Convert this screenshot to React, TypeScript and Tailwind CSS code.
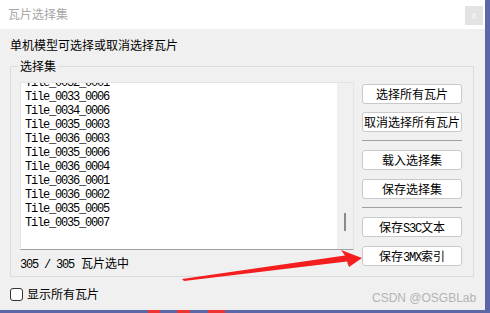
// 瓦片选择集 dialog

const tiles = [
  "Tile_0032_0001",
  "Tile_0033_0006",
  "Tile_0034_0006",
  "Tile_0035_0003",
  "Tile_0036_0003",
  "Tile_0035_0006",
  "Tile_0036_0004",
  "Tile_0036_0001",
  "Tile_0036_0002",
  "Tile_0035_0005",
  "Tile_0035_0007",
];

const cjk = "font-['Noto_Sans_CJK_SC',sans-serif]";
const mono = "font-['Liberation_Mono','Noto_Sans_CJK_SC',monospace] tracking-[-1.2px]";

function Btn({ children, first }: { children: React.ReactNode; first?: boolean }) {
  return (
    <button
      className={`${first ? "" : "mt-[9px]"} h-[20px] w-full rounded-[3px] border border-[#c9c9c9] bg-white text-[12px] leading-[18px] text-black ${cjk}`}
    >
      {children}
    </button>
  );
}

export default function App() {
  return (
    <div className="relative flex h-[313px] w-[490px] flex-col overflow-hidden bg-[#5b67a6]">
      <div className="flex h-[310px] w-[485px] flex-col">
        {/* Title bar */}
        <div className="flex h-[29px] items-start justify-between bg-white pl-[8px] pr-[2px]">
          <span className={`mt-[6px] text-[12px] leading-[16px] text-[#a6a6a6] ${cjk}`}>瓦片选择集</span>
          <div className="mt-[6px] flex h-[19px] w-[18px] items-center justify-center bg-[#e3e3e3] text-[10px] leading-none text-[#f7f7f7] font-['Liberation_Sans',sans-serif]">
            x
          </div>
        </div>

        {/* Body */}
        <div className={`flex-1 bg-[#f0f0f0] pl-[10px] pr-[11px] text-[12px] text-black ${cjk}`}>
          <div className="pt-[8px] leading-[16px]">单机模型可选择或取消选择瓦片</div>

          {/* Group box */}
          <div className="relative mt-[13px] h-[211px] border border-[#dcdcdc]">
            <span className="absolute left-[7px] top-[-9px] bg-[#f0f0f0] px-[2px] leading-[16px]">选择集</span>

            <div className="flex pl-[9px] pt-[15px]">
              <div className="flex w-[334px] flex-col">
                {/* List box */}
                <div className="flex h-[168px] border border-[#e4e4e4] border-b-[#a0a0a0]">
                  <div className="flex-1 overflow-hidden bg-white">
                    <div className={`-mt-[7px] pl-[4px] text-[12px] leading-[14px] ${mono}`}>
                      {tiles.map((t) => (
                        <div key={t}>{t}</div>
                      ))}
                    </div>
                  </div>
                  <div className="w-[16px] bg-[#f0f0f0] pl-[7px] pt-[130px]">
                    <div className="h-[18px] w-[2px] bg-[#8a8a8a]" />
                  </div>
                </div>
                <div className="mt-[5px] pl-[0px] leading-[16px]">
                  <span className={mono}>305 / 305 </span>
                  <span className="ml-[1px]">瓦片选中</span>
                </div>
              </div>

              {/* Buttons */}
              <div className="ml-[8px] flex w-[100px] flex-col pt-[2px]">
                <Btn first>选择所有瓦片</Btn>
                <div className="mt-[8px]">
                  <Btn first>取消选择所有瓦片</Btn>
                </div>
                <div className="mt-[8px] h-px bg-[#a0a0a0]" />
                <Btn>载入选择集</Btn>
                <Btn>保存选择集</Btn>
                <div className="mt-[8px] h-px bg-[#a0a0a0]" />
                <Btn>
                  保存<span className={mono}>S3C</span>文本
                </Btn>
                <Btn>
                  保存<span className={mono}>3MX</span>索引
                </Btn>
              </div>
            </div>
          </div>

          {/* Checkbox */}
          <label className="mt-[9px] flex items-center">
            <span className="h-[13px] w-[13px] rounded-[3px] border border-[#333] bg-white" />
            <span className="ml-[4px] leading-[16px]">显示所有瓦片</span>
          </label>
        </div>
      </div>

      {/* bottom strip bits */}
      <div className="flex h-[3px]">
        <div className="ml-[148px] w-[12px] bg-[#e33]" />
        <div className="ml-[17px] w-[13px] bg-[#e33]" />
        <div className="ml-[18px] w-[17px] bg-[#e33]" />
      </div>

      {/* watermark */}
      <span className="absolute left-[372px] top-[290px] text-[12px] leading-[16px] text-[#b4b4b4] font-['Liberation_Sans',sans-serif]">
        CSDN @OSGBLab
      </span>

      {/* red annotation arrow */}
      <svg className="pointer-events-none absolute left-0 top-0" width="490" height="313" viewBox="0 0 490 313">
        <polygon
          points="182,279 345,255.5 341,250 362,258 349,267 347,261.5 184,281"
          fill="#f41e1e"
        />
      </svg>
    </div>
  );
}
